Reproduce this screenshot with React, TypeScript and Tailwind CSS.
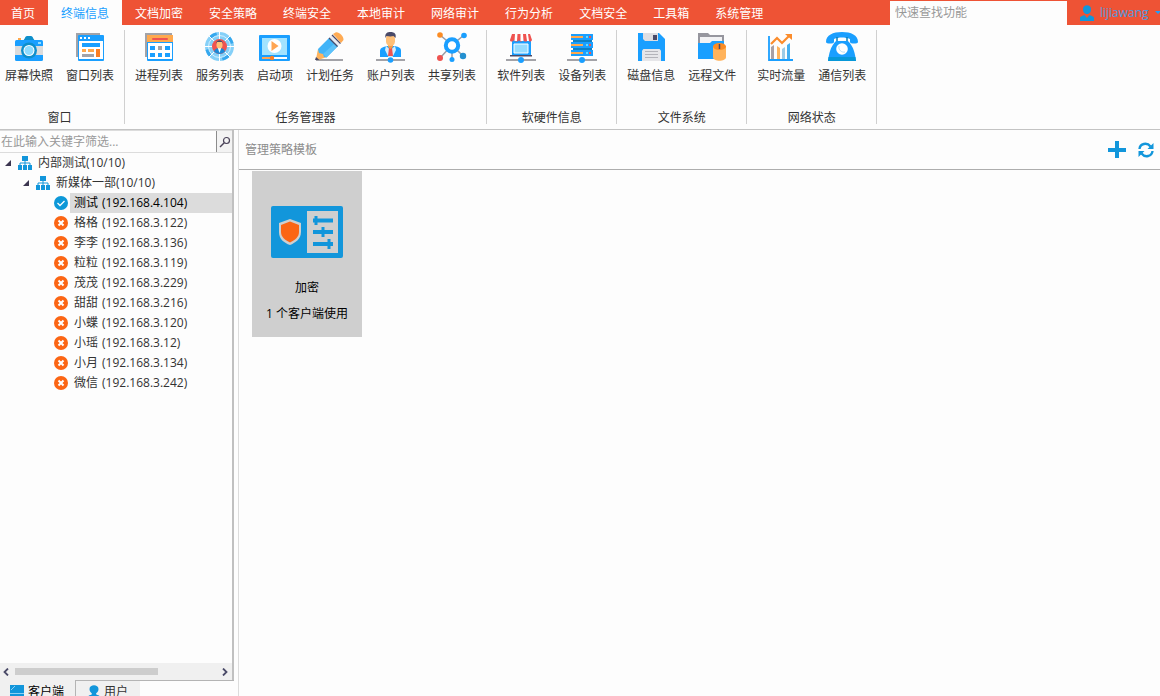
import type { ReactNode } from "react";

const tabs = [
	"首页",
	"终端信息",
	"文档加密",
	"安全策略",
	"终端安全",
	"本地审计",
	"网络审计",
	"行为分析",
	"文档安全",
	"工具箱",
	"系统管理",
];

const clients = [
	{ name: "测试", ip: "192.168.4.104", online: true },
	{ name: "格格", ip: "192.168.3.122", online: false },
	{ name: "李李", ip: "192.168.3.136", online: false },
	{ name: "粒粒", ip: "192.168.3.119", online: false },
	{ name: "茂茂", ip: "192.168.3.229", online: false },
	{ name: "甜甜", ip: "192.168.3.216", online: false },
	{ name: "小蝶", ip: "192.168.3.120", online: false },
	{ name: "小瑶", ip: "192.168.3.12", online: false },
	{ name: "小月", ip: "192.168.3.134", online: false },
	{ name: "微信", ip: "192.168.3.242", online: false },
];

function Icon({ children }: { children: ReactNode }) {
	return (
		<svg viewBox="0 0 32 32" className="size-8" fill="none" aria-hidden="true">
			{children}
		</svg>
	);
}

function CameraIcon() {
	return (
		<Icon>
			<path d="M5 7h3v3H5z" fill="#ffa94d" />
			<path d="M12 7c0-1 1-2 2-2h4c1 0 2 1 2 2l2 3H10z" fill="#0e8fcb" />
			<rect x="2" y="9" width="28" height="21" rx="1.5" fill="#1a9fff" />
			<path d="M2 15h28v9H2z" fill="#dcdcdc" />
			<circle cx="16" cy="19.5" r="8" fill="#0e8fcb" />
			<circle cx="16" cy="19.5" r="5.5" fill="#fff" />
			<circle cx="16" cy="19.5" r="4.5" fill="#8fdcff" />
			<path d="M25 11h3v2h-3z" fill="#8fdcff" />
		</Icon>
	);
}

function WindowIcon() {
	return (
		<Icon>
			<path d="M2 2h24v3H5v21H2z" fill="#a3a3a8" />
			<rect x="4" y="4" width="26" height="26" rx="1" fill="#1a9fff" />
			<path d="M5 10h24v18H5z" fill="#fff" />
			<path d="M6 6h2v2H6zM10 6h2v2h-2zM14 6h2v2h-2z" fill="#fff" />
			<path d="M8 12h18v4H8z" fill="#1a9fff" />
			<path d="M8 18h4v3H8zM14 18h6v3h-6z" fill="#ffa94d" />
			<path d="M22 18h4v8h-4z" fill="#fb7f24" />
			<path d="M8 23h12v3H8z" fill="#a3a3a8" />
		</Icon>
	);
}

function CalendarIcon() {
	return (
		<Icon>
			<path d="M2 2h27v3H5v21H2z" fill="#a3a3a8" />
			<rect x="4" y="4" width="26" height="26" rx="1" fill="#1a9fff" />
			<path d="M4 4h26v7H4z" fill="#ffa94d" />
			<rect x="9" y="7" width="16" height="2" rx="1" fill="#ef5350" />
			<path d="M5 12h24v16H5z" fill="#fff" />
			<path d="M7 15h5v4H7zM22 15h5v4h-5zM7 22h5v4H7zM15 22h4v4h-4zM22 22h5v4h-5z" fill="#1a9fff" />
			<path d="M15 15h4v4h-4z" fill="#a3a3a8" />
		</Icon>
	);
}

function ServiceIcon() {
	return (
		<Icon>
			<circle cx="15.5" cy="15.5" r="14.5" fill="#85d0f8" />
			<path d="M5.200 5.200a14.500 14.500 0 0 1 7-3.700l1 3a11 11 0 0 0-5.700 3zM25.800 25.800a14.500 14.500 0 0 1-7 3.700l-1-3a11 11 0 0 0 5.700-3zM1.500 19l3-1a11 11 0 0 0 3 5.500l-2.300 2.300a14.500 14.500 0 0 1-3.700-6.800zM29.500 12l-3 1a11 11 0 0 0-3-5.500l2.300-2.300a14.500 14.500 0 0 1 3.700 6.800z" fill="#35a8ee" />
			<circle cx="15.500" cy="15.500" r="11" stroke="#e8f7ff" strokeWidth=".8" />
			<path d="M15.500 1v29M1 15.500h29M5 5l21 21M26 5 5 26" stroke="#fff" />
			<circle cx="15.500" cy="15.500" r="7.500" fill="#ef5350" />
			<path d="M10 20.500c1-3 3-3.500 5.500-3.500s4.500.5 5.500 3.500a7.500 7.500 0 0 1-11 0z" fill="#1a8ad8" />
			<path d="M13.800 17h3.400l-1.700 5z" fill="#fff" />
			<rect x="12.500" y="10" width="6" height="7.500" rx="3" fill="#ffc078" />
			<path d="M12 13c0-5 7-5 7 0l-1-2h-5z" fill="#4a4a68" />
		</Icon>
	);
}

function StartupIcon() {
	return (
		<Icon>
			<rect y="4" width="31" height="26" rx="1" fill="#1a9fff" />
			<path d="M3 7h25v17H3z" fill="#a2e3ff" />
			<circle cx="15.500" cy="15" r="7" fill="#fff" />
			<path d="m12.500 10 7 5-7 5z" fill="#ffa552" />
			<path d="M3 26h10v2H3z" fill="#ffa552" />
			<path d="M14 26h14v2H14z" fill="#fff" />
			<circle cx="13" cy="27" r="2.200" fill="#fb7f24" />
		</Icon>
	);
}

function PencilIcon() {
	return (
		<Icon>
			<path d="M2 28h27v2H2z" fill="#a3a3a8" />
			<path d="m4 18 9 8-9 3-2-1z" fill="#ffb35c" />
			<path d="m2 26 3.500 3H1z" fill="#4a4a68" />
			<path d="M4 18 15.500 6.500 24 15 12.500 26.500l-2.500-.5-1-3-4-1z" fill="#41b4f8" />
			<path d="m9 23 12-11 3 3-11.500 11.500z" fill="#5cc2fa" />
			<path d="m15.500 6.500 3-3 8.500 8.500-3 3z" fill="#e8eaf2" />
			<path d="m15 7 8.500 8.500M18 4l8.500 8.500" stroke="#4a4a68" strokeWidth="1.200" />
			<path d="m19 3 2.500-1.500C24 0 30 5 29.500 9L27 12z" fill="#ffab54" />
		</Icon>
	);
}

function AccountIcon() {
	return (
		<Icon>
			<path d="M1 28h29v2H1z" fill="#a3a3a8" />
			<path d="M5 26v-6c0-3 3-4 7-5h8c4 1 6 2 6 5v6z" fill="#1a9fff" />
			<path d="m11 15 4.500 4 4.500-4 1 4-3.500 7h-4L10 19z" fill="#d6edfb" />
			<path d="m14 17 1.500-1 1.500 1 1 8h-5z" fill="#ef5350" />
			<path d="M13 12h5v4l-2.500 2-2.500-2z" fill="#f49b48" />
			<rect x="11" y="3" width="9" height="12" rx="4.500" fill="#ffc078" />
			<path d="M10.500 7c-1-5 2-6 5-6 4 0 6 2 5 6l-2-2c-2 .5-4 .5-7 0z" fill="#4a4a68" />
			<circle cx="15.500" cy="29" r="2.800" fill="#1a9fff" />
		</Icon>
	);
}

function ShareIcon() {
	return (
		<Icon>
			<path d="m4 4 12 10L28 4M4 27l12-13 11 11M16 14v15" stroke="#9c9ca4" strokeWidth="1.500" />
			<circle cx="16" cy="14.500" r="6.200" fill="#fff" stroke="#1a9fff" strokeWidth="4" />
			<circle cx="4" cy="4" r="2.800" fill="#fb8c24" />
			<circle cx="28" cy="4.500" r="2.800" fill="#1a9fff" />
			<circle cx="4" cy="27" r="3" fill="#ef5350" />
			<circle cx="27" cy="25" r="3.200" fill="#2490d0" />
			<circle cx="16" cy="28.500" r="2.500" fill="#1a9fff" />
		</Icon>
	);
}

function SoftwareIcon() {
	return (
		<Icon>
			<path d="M1 28h30v2H1z" fill="#a3a3a8" />
			<path d="M7 8h19v17H7z" fill="#1a9fff" />
			<path d="M9 13h14v9H9z" fill="#95dcff" stroke="#fff" />
			<path d="M5 24h22v1.500H5z" fill="#4a4a68" />
			<path d="M7 3h18l2 6c-1 2-3 2-4 0-1 2-4 2-5 0-1 2-3 2-4 0-1 2-4 2-5 0-1 2-4 2-4 0z" fill="#ef5350" />
			<path d="M10 3h2.500L12 10h-2.500zM15.500 3H18l.5 7h-3zM21 3h2l1 7h-2z" fill="#fff" />
			<circle cx="16" cy="29" r="3" fill="#1a9fff" />
		</Icon>
	);
}

function DeviceIcon() {
	return (
		<Icon>
			<path d="M1 28h30v2H1z" fill="#a3a3a8" />
			<path d="M7 8h19v4H7zM7 16h19v4H7z" fill="#0e80c4" />
			<path d="M5 3h22v6H5zM5 11h22v6H5zM5 19h22v6H5z" fill="#1a9fff" />
			<path d="M5 5h12v2H5zM5 13h12v2H5zM5 21h12v2H5z" fill="#ffa94d" />
			<path d="M20 5h2v2h-2zM20 13h2v2h-2zM20 21h2v2h-2z" fill="#65dcff" />
			<path d="M23 5h2v2h-2zM23 13h2v2h-2zM23 21h2v2h-2z" fill="#ef5350" />
			<circle cx="16" cy="29" r="3" fill="#1a9fff" />
		</Icon>
	);
}

function DiskIcon() {
	return (
		<Icon>
			<path d="M3 2h21l6 6v22H3z" fill="#1a9fff" />
			<path d="M8 2h15v8H10L8 8z" fill="#dedee2" />
			<path d="M18 4h4v5h-4z" fill="#4a4a68" />
			<path d="M7 19.500 8.500 18h16l1.500 1.500V30H7z" fill="#e6e6e9" />
			<path d="M10 20.500h13M10 23.500h13M10 26.500h13" stroke="#b4b4ba" />
		</Icon>
	);
}

function RemoteIcon() {
	return (
		<Icon>
			<path d="M2 2h10l2 2h14v8H2z" fill="#96969e" />
			<path d="M4 6h22v8H4z" fill="#f2f2f4" />
			<path d="M2 12h12l2-2h12v18H2z" fill="#1a9fff" />
			<path d="M17 15h13v11c0 5-13 5-13 0z" fill="#ffb35c" />
			<ellipse cx="23.500" cy="15.500" rx="6.500" ry="3.500" fill="#fb8c24" />
			<path d="M23.500 13v5" stroke="#4a4a68" strokeWidth="1.500" />
		</Icon>
	);
}

function ChartIcon() {
	return (
		<Icon>
			<path d="M6 16l3-2v14H6z" fill="#a9a0a6" />
			<path d="M12 15l3 2v11h-3z" fill="#ffb35c" />
			<path d="M17 18l3-2v12h-3z" fill="#9dcbe6" />
			<path d="M22 14l3-2v16h-3z" fill="#45aef0" />
			<path d="M4 5v24h24" stroke="#1a9fff" strokeWidth="1.800" />
			<path d="m6 13 6-6 5 5 8-8" stroke="#fb8c2c" strokeWidth="2.200" />
			<path d="M20 3h7v6z" fill="#fb8c2c" />
		</Icon>
	);
}

function PhoneIcon() {
	return (
		<Icon>
			<path d="M0 11C0 4 7 1 16 1s16 3 16 10c0 2-8 2-8 0V8c-5-2-11-2-16 0v3c0 2-8 2-8 0z" fill="#1a9fff" />
			<path d="M11 6v5M21 6v5" stroke="#0e80b8" strokeWidth="1.500" />
			<path d="M10 10h12c6 6 7 13 8 20H2c1-7 2-14 8-20z" fill="#1a9fff" />
			<path d="M2.500 26h27l.5 4H2z" fill="#0898d8" />
			<circle cx="16" cy="18" r="5.800" fill="#fff" />
			<path d="M13 15a5 5 0 0 0 6 6" stroke="#b8dcf2" />
		</Icon>
	);
}

const groups = [
	{
		title: "窗口",
		items: [
			{ label: "屏幕快照", icon: CameraIcon },
			{ label: "窗口列表", icon: WindowIcon },
		],
	},
	{
		title: "任务管理器",
		items: [
			{ label: "进程列表", icon: CalendarIcon },
			{ label: "服务列表", icon: ServiceIcon },
			{ label: "启动项", icon: StartupIcon },
			{ label: "计划任务", icon: PencilIcon },
			{ label: "账户列表", icon: AccountIcon },
			{ label: "共享列表", icon: ShareIcon },
		],
	},
	{
		title: "软硬件信息",
		items: [
			{ label: "软件列表", icon: SoftwareIcon },
			{ label: "设备列表", icon: DeviceIcon },
		],
	},
	{
		title: "文件系统",
		items: [
			{ label: "磁盘信息", icon: DiskIcon },
			{ label: "远程文件", icon: RemoteIcon },
		],
	},
	{
		title: "网络状态",
		items: [
			{ label: "实时流量", icon: ChartIcon },
			{ label: "通信列表", icon: PhoneIcon },
		],
	},
];

function OrgIcon() {
	return (
		<svg viewBox="0 0 14 14" className="size-[14px]" fill="none" aria-hidden="true">
			<path d="M4 0h6v5H4zM0 9h4v5H0zM5 9h4v5H5zM10 9h4v5h-4z" fill="#1296db" />
			<path d="M7 5v4M2 9V7h10v2" stroke="#1296db" />
		</svg>
	);
}

function StatusIcon({ online }: { online: boolean }) {
	return (
		<svg viewBox="0 0 14 14" className="size-[14px]" fill="none" aria-hidden="true">
			<circle cx="7" cy="7" r="7" fill={online ? "#0d98d8" : "#fb6514"} />
			{online ? (
				<path d="m3.500 7 2.500 2.500 4.500-4.500" stroke="#fff" strokeWidth="1.300" />
			) : (
				<path d="m4.500 4.500 5 5m0-5-5 5" stroke="#fff" strokeWidth="2" />
			)}
		</svg>
	);
}

function Expander() {
	return (
		<svg viewBox="0 0 6 6" className="size-[6px]" aria-hidden="true">
			<path d="M6 0v6H0z" fill="#3c3650" />
		</svg>
	);
}

function TopBar() {
	return (
		<header className="flex h-[25px] flex-none bg-[#ee5335] text-white">
			<nav className="flex">
				{tabs.map((tab, i) => (
					<button
						key={tab}
						type="button"
						className={
							i === 1
								? "bg-[#fdfdfd] px-[13px] pt-[3px] text-[#1a9fff]"
								: "px-[13px] pt-[3px] first:pl-[11px]"
						}
					>
						{tab}
					</button>
				))}
			</nav>
			<input
				type="text"
				aria-label="快速查找功能"
				placeholder="快速查找功能"
				className="mt-px ml-auto w-[177px] bg-[#fdfdfd] px-[5px] text-black outline-none placeholder:text-[#999999]"
			/>
			<button type="button" className="flex w-[93px] items-center gap-[6px] pt-px pl-[13px] text-[#4c9be0]">
				<svg viewBox="0 0 14 16" className="h-4 w-[14px] flex-none" aria-hidden="true">
					<path d="M3 4c0-5 8-5 8 0 0 4-2 5-4 5S3 8 3 4z" fill="#1296db" />
					<path d="M0 16v-3c0-2 3-2 4.500-3L7 13l2.500-3c1.500 1 4.500 1 4.500 3v3z" fill="#1296db" />
				</svg>
				<span>lijiawang</span>
				<svg viewBox="0 0 6 4" className="h-1 w-[6px] flex-none" aria-hidden="true">
					<path d="M0 0h6L3 3z" fill="#1a9fff" />
				</svg>
			</button>
		</header>
	);
}

function Ribbon() {
	return (
		<div className="flex h-[105px] flex-none border-b border-[#c3c3c3] pt-[5px] pb-[5px]">
			{groups.map((group) => (
				<section
					key={group.title}
					className="flex flex-col border-r border-[#d0d0d0] px-[5px] first:pl-0"
				>
					<div className="flex gap-[3px]">
						{group.items.map((item) => (
							<button key={item.label} type="button" className="flex flex-col items-center px-[5px] pt-px">
								<item.icon />
								<span className="mt-[5px] leading-4">{item.label}</span>
							</button>
						))}
					</div>
					<h2 className="mt-[26px] text-center leading-4">{group.title}</h2>
				</section>
			))}
		</div>
	);
}

function Sidebar() {
	return (
		<aside className="flex w-[234px] flex-none flex-col">
			<div className="flex min-h-0 flex-1 flex-col border-r-2 border-[#c0c0c0]">
				<div className="flex h-[23px] flex-none border-y border-[#dcdcdc]">
					<input
						type="text"
						aria-label="在此输入关键字筛选..."
						placeholder="在此输入关键字筛选..."
						className="min-w-0 flex-1 px-px outline-none placeholder:text-[#999999]"
					/>
					<button
						type="button"
						aria-label="搜索"
						className="flex w-4 items-center justify-center border-l border-[#8c8c8c] bg-[#f3f3f3]"
					>
						<svg viewBox="0 0 12 12" className="size-3" fill="none" stroke="#4a4258" aria-hidden="true">
							<circle cx="7.500" cy="4.500" r="3" strokeWidth="1.200" />
							<path d="M5 7 1 11" strokeWidth="1.500" />
						</svg>
					</button>
				</div>
				<ul className="min-h-0 flex-1 leading-5">
					<li className="flex items-center gap-[7px] pl-[5px]">
						<Expander />
						<span className="flex items-center gap-[6px]">
							<OrgIcon />
							内部测试(10/10)
						</span>
					</li>
					<li className="flex items-center gap-[7px] pl-[23px]">
						<Expander />
						<span className="flex items-center gap-[6px]">
							<OrgIcon />
							新媒体一部(10/10)
						</span>
					</li>
					{clients.map((client) => (
						<li key={client.ip} className="flex items-center gap-[2px] pl-[54px]">
							<StatusIcon online={client.online} />
							<span
								className={
									client.online ? "flex flex-1 gap-1 bg-[#dcdcdc] pl-1 text-black" : "flex flex-1 gap-1 pl-1"
								}
							>
								<span>{client.name}</span>
								<span>({client.ip})</span>
							</span>
						</li>
					))}
				</ul>
				<div className="flex h-[17px] flex-none items-center bg-[#f0f0f0]">
					<svg viewBox="0 0 15 8" className="h-2 w-[15px]" fill="none" aria-hidden="true">
						<path d="M8 .5 4.500 4 8 7.500" stroke="#4a4a68" strokeWidth="1.800" />
					</svg>
					<div className="flex-1">
						<div className="h-[7px] w-[71%] bg-[#cdcdcd]" />
					</div>
					<svg viewBox="0 0 15 8" className="h-2 w-[15px]" fill="none" aria-hidden="true">
						<path d="M6 .5 9.500 4 6 7.500" stroke="#4a4a68" strokeWidth="1.800" />
					</svg>
				</div>
			</div>
			<div className="flex h-4 flex-none overflow-hidden">
				<button type="button" className="flex h-6 w-[75px] items-center gap-1 bg-[#f0f0f0] pl-[10px] text-black">
					<svg viewBox="0 0 14 14" className="size-[14px]" fill="none" aria-hidden="true">
						<path d="M0 0h14v11H0zM4 12h6v2H4z" fill="#1296db" />
						<path d="m1 5 4-4M0 8.500h14" stroke="#8ed0f4" />
					</svg>
					客户端
				</button>
				<div className="flex-1 border-t border-[#b4b4b4]">
					<button type="button" className="flex h-[22px] w-[65px] items-center gap-1 border-l border-[#b4b4b4] bg-[#f0f0f0] pl-3">
						<svg viewBox="0 0 12 14" className="h-[14px] w-3" aria-hidden="true">
							<path d="M1.500 4C1.500-1 10.500-1 10.500 4 10.500 7 8 8 8 9c0 1 4 1 4 3v2H0v-2c0-2 4-2 4-3 0-1-2.500-2-2.500-5z" fill="#1296db" />
						</svg>
						用户
					</button>
				</div>
			</div>
		</aside>
	);
}

function PolicyCard() {
	return (
		<button
			type="button"
			className="mt-px ml-[13px] flex h-[166px] w-[110px] flex-col items-center bg-[#cfcfcf] pt-[35px] text-black"
		>
			<svg viewBox="0 0 72 52" className="h-[52px] w-[72px]" fill="none" aria-hidden="true">
				<rect width="72" height="52" rx="2" fill="#1296db" />
				<path d="m19 13 11 4v9c0 7-6 11-11 13C13 37 8 33 8 26v-9z" fill="#cfcfcf" />
				<path d="m19 15.500 9 3.500v7c0 5-4 8-9 10.500-5-2.500-9-5.500-9-10.500v-7z" fill="#fb6514" />
				<path d="M36 5h31v42H36z" fill="#cfcfcf" />
				<path d="M42 14.500h20M42 26h20M42 38h20" stroke="#1296db" strokeWidth="4" />
				<path d="M45 10v9M52 21v10M58 33v10" stroke="#1296db" strokeWidth="3" />
			</svg>
			<span className="mt-5 leading-5">加密</span>
			<span className="mt-[6px] leading-5">1 个客户端使用</span>
		</button>
	);
}

function PolicyPanel() {
	return (
		<main className="ml-1 flex min-w-0 flex-1 flex-col border-l border-[#dcdcdc]">
			<div className="flex h-10 flex-none items-center border-b border-[#adadad] pr-[6px] pl-[6px]">
				<h1 className="flex-1 text-[#8c8c8c]">管理策略模板</h1>
				<div className="flex items-center gap-3">
					<button type="button" aria-label="新建">
						<svg viewBox="0 0 18 18" className="size-[18px]" aria-hidden="true">
							<path d="M7 0h4v7h7v4h-7v6H7v-6H0V7h7z" fill="#1296db" />
						</svg>
					</button>
					<button type="button" aria-label="刷新">
						<svg viewBox="0 0 16 16" className="size-4" fill="none" aria-hidden="true">
							<path d="M1.500 7C2 1.500 9 0 12.500 4.500M14.500 9C14 14.500 7 16 3.500 11.500" stroke="#1296db" strokeWidth="2.400" />
							<path d="M15.500 1v6h-6zM.5 15V9h6z" fill="#1296db" />
						</svg>
					</button>
				</div>
			</div>
			<PolicyCard />
		</main>
	);
}

export default function App() {
	return (
		<div className="flex h-screen flex-col overflow-hidden bg-[#fdfdfd] font-['Open_Sans','Noto_Sans_CJK_SC',sans-serif] text-[12px] text-[#333333]">
			<TopBar />
			<Ribbon />
			<div className="flex min-h-0 flex-1">
				<Sidebar />
				<PolicyPanel />
			</div>
		</div>
	);
}
